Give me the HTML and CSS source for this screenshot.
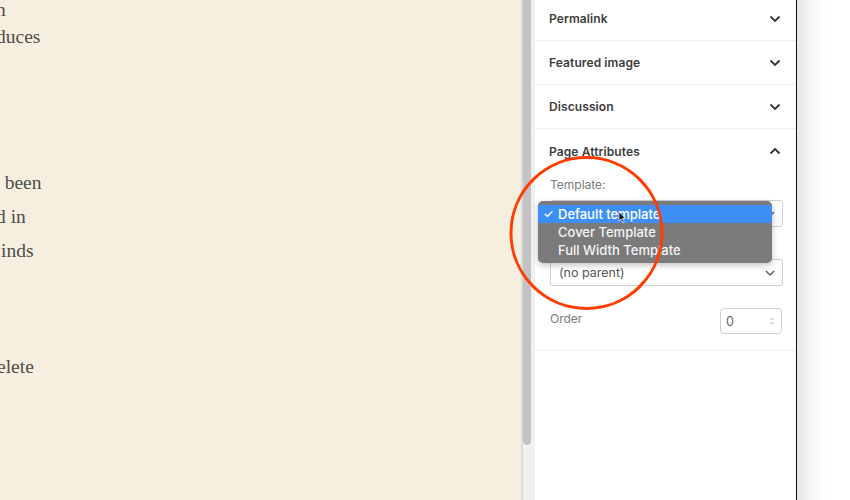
FILE: index.html
```html
<!DOCTYPE html>
<html lang="en">
<head>
<meta charset="utf-8">
<title>Page Attributes</title>
<link rel="stylesheet" href="styles.css">
</head>
<body>
<div class="screen">
  <main class="article">
    <div class="ln ln-top">n</div>
    <div class="ln ln-duces">duces</div>
    <div class="para2">
      <div class="ln ln-been">n been</div>
      <div class="ln ln-din">d in</div>
      <div class="ln ln-inds">inds</div>
    </div>
    <div class="ln ln-elete">elete</div>
  </main>
  <div class="scrollbar"><div class="thumb"></div></div>
  <aside class="sidebar">
    <div class="panel panel-first">
      <span class="panel-title">Permalink</span>
      <svg class="chev" viewBox="0 0 12 8" width="12" height="8"><path d="M1.5 1.5 L6 6 L10.5 1.5" fill="none" stroke="#333" stroke-width="1.8"/></svg>
    </div>
    <div class="panel">
      <span class="panel-title">Featured image</span>
      <svg class="chev" viewBox="0 0 12 8" width="12" height="8"><path d="M1.5 1.5 L6 6 L10.5 1.5" fill="none" stroke="#333" stroke-width="1.8"/></svg>
    </div>
    <div class="panel">
      <span class="panel-title">Discussion</span>
      <svg class="chev" viewBox="0 0 12 8" width="12" height="8"><path d="M1.5 1.5 L6 6 L10.5 1.5" fill="none" stroke="#333" stroke-width="1.8"/></svg>
    </div>
    <section class="pa">
      <div class="panel panel-open">
        <span class="panel-title">Page Attributes</span>
        <svg class="chev" viewBox="0 0 12 8" width="12" height="8"><path d="M1.5 6.5 L6 2 L10.5 6.5" fill="none" stroke="#333" stroke-width="1.8"/></svg>
      </div>
      <div class="pa-body">
        <div class="field-label first">Template:</div>
        <div class="select">
          <span class="select-value"></span>
          <svg class="select-chev" viewBox="0 0 10 6" width="10" height="6"><path d="M1 1 L5 5 L9 1" fill="none" stroke="#555" stroke-width="1.4"/></svg>
        </div>
        <div class="field-label">Parent Page:</div>
        <div class="select">
          <span class="select-value">(no parent)</span>
          <svg class="select-chev" viewBox="0 0 10 6" width="10" height="6"><path d="M1 1 L5 5 L9 1" fill="none" stroke="#555" stroke-width="1.4"/></svg>
        </div>
        <div class="order-row">
          <span class="order-label">Order</span>
          <div class="number">
            <span>0</span>
            <svg class="spin" viewBox="0 0 6 10" width="6" height="10"><path d="M1 4 L3 2 L5 4 M1 6 L3 8 L5 6" fill="none" stroke="#bbb" stroke-width="1"/></svg>
          </div>
        </div>
      </div>
    </section>
  </aside>
  <div class="shadow"></div>

  <div class="menu">
    <div class="menu-item active"><span class="check">✓</span>Default template</div>
    <div class="menu-item">Cover Template</div>
    <div class="menu-item">Full Width Template</div>
  </div>

  <svg class="cursor" viewBox="0 0 12 18" width="12" height="18"><path d="M1 1 L1 14 L4 11 L6.5 16.5 L8.5 15.5 L6 10 L10 10 Z" fill="#111" stroke="#fff" stroke-width="1"/></svg>

  <svg class="ring" viewBox="0 0 160 160" width="160" height="160"><ellipse cx="78.5" cy="79" rx="75.5" ry="75.5" fill="none" stroke="#ff3d00" stroke-width="3"/></svg>
</div>
</body>
</html>
```

FILE: styles.css
```css
html, body {
  margin: 0;
  padding: 0;
  background: #fff;
}

.screen {
  position: relative;
  display: flex;
  width: 850px;
  height: 500px;
  overflow: hidden;
}

.article {
  width: 521px;
  flex: none;
  background: #f6efe0;
  overflow: hidden;
  font-family: "Liberation Serif", "DejaVu Serif", serif;
  font-size: 19.5px;
  color: #4f4c48;
}

.ln {
  white-space: nowrap;
  line-height: 34px;
  height: 34px;
}

.ln-top {
  height: 20px;
  line-height: 20px;
  margin-left: -4px;
}

.ln-duces { margin-left: -4px; }

.para2 { margin-top: 112px; }

.ln-been { margin-left: -10px; }
.ln-din { margin-left: -4px; }
.ln-inds { margin-left: 1px; }

.ln-elete {
  margin-top: 82px;
  margin-left: -3px;
}

.scrollbar {
  width: 12px;
  flex: none;
  background: #f1f1f1;
  border-left: 2px solid #dcdcdc;
}

.thumb {
  width: 8px;
  height: 445px;
  background: #c3c3c6;
  border-radius: 0 0 4px 4px;
}

.sidebar {
  width: 261px;
  flex: none;
  background: #fff;
  border-right: 1px solid #111;
  font-family: "Inter", "Noto Sans", sans-serif;
  color: #3c3c3c;
}

.panel {
  height: 43px;
  display: flex;
  align-items: center;
  justify-content: space-between;
  padding: 0 15px 0 14px;
  border-bottom: 1px solid #eeeeee;
}

.panel-first {
  margin-top: -3px;
}

.panel-open {
  border-bottom: none;
  height: 44px;
}

.panel-title {
  font-size: 12px;
  font-weight: 600;
  color: #3d3d3d;
  letter-spacing: 0.1px;
}

.chev { display: block; }

.pa {
  border-bottom: 1px solid #eeeeee;
}

.pa-body {
  padding: 0 13px 16px 15px;
}

.field-label {
  font-size: 12px;
  line-height: 14px;
  height: 14px;
  color: #7a7a7a;
  margin-top: 10px;
}

.field-label.first {
  margin-top: 5px;
}

.select {
  margin-top: 8px;
  height: 25px;
  border: 1px solid #d0d0d0;
  border-radius: 3px;
  display: flex;
  align-items: center;
  justify-content: space-between;
  padding: 0 7px 0 8px;
}

.select-value {
  font-size: 12.5px;
  color: #555;
}

.select-chev { display: block; }

.order-row {
  margin-top: 22px;
  display: flex;
  justify-content: space-between;
  align-items: flex-start;
}

.order-label {
  font-size: 12px;
  color: #7a7a7a;
  line-height: 22px;
}

.number {
  width: 62px;
  height: 26px;
  border: 1px solid #cfcfcf;
  border-radius: 4px;
  margin-right: 1px;
  display: flex;
  align-items: center;
  justify-content: space-between;
  padding: 0 6px 0 5px;
  box-sizing: border-box;
  font-size: 12.5px;
  color: #666;
}

.spin { display: block; }

.shadow {
  flex: 1;
  background: linear-gradient(to right, #e6e6e6 0px, #f4f4f4 12px, #fcfcfc 26px, #ffffff 36px);
}

.menu {
  position: absolute;
  left: 538px;
  top: 201px;
  width: 234px;
  height: 62px;
  box-sizing: border-box;
  padding-top: 4px;
  background: #7b7b7b;
  border-radius: 5px;
  box-shadow: 0 2px 6px rgba(0, 0, 0, 0.25);
  font-family: "Inter", "Noto Sans", sans-serif;
  font-size: 13px;
  font-weight: 500;
  color: #f4f4f4;
}

.menu-item {
  height: 18px;
  line-height: 18px;
  padding-left: 20px;
  position: relative;
  white-space: nowrap;
}

.menu-item.active {
  background: #3d8ff6;
  color: #fff;
}

.check {
  position: absolute;
  left: 5px;
  top: 0;
  font-size: 12px;
}

.cursor {
  position: absolute;
  left: 618px;
  top: 211px;
  width: 9px;
  height: 13px;
}

.ring {
  position: absolute;
  left: 508px;
  top: 154px;
}
```
